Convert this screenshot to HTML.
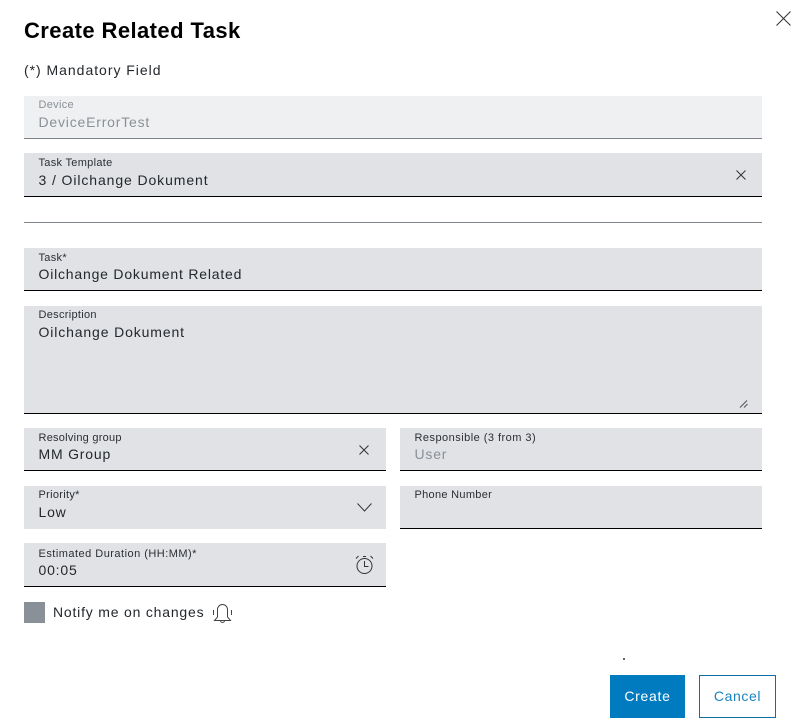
<!DOCTYPE html>
<html><head><meta charset="utf-8"><style>
html,body{margin:0;padding:0;background:#fff;width:794px;height:728px;overflow:hidden}
body{position:relative;font-family:"Liberation Sans",sans-serif;color:#1a1d21}
.f{position:absolute;background:#e0e2e5;box-sizing:border-box;border-bottom:1px solid #000}
.t{position:absolute;white-space:nowrap}
.l{font-size:11px;letter-spacing:.3px;line-height:14px;color:#2b2f34;margin-top:1px}
.v{font-size:14px;letter-spacing:.8px;line-height:18px;color:#24282c}
svg{position:absolute;overflow:visible}
</style></head><body>
<div class="t" style="left:24px;top:18px;font-size:22px;font-weight:bold;line-height:26px;color:#000;letter-spacing:.42px">Create Related Task</div>
<div class="t v" style="left:24px;top:61px;letter-spacing:.97px">(*) Mandatory Field</div>
<svg style="left:776px;top:11px" width="15" height="15" fill="none" stroke="#333" stroke-width="1"><path d="M.5.5 14.500 14.500M14.500.5.5 14.500"/></svg>

<div class="f" style="left:24px;top:96px;width:738px;height:43px;background:#eff0f2;border-color:#7d8389"></div>
<div class="t l" style="left:38.500px;top:97px;color:#8a9097">Device</div>
<div class="t v" style="left:38.500px;top:113px;color:#8a9097">DeviceErrorTest</div>

<div class="f" style="left:24px;top:153px;width:738px;height:44px"></div>
<div class="t l" style="left:38.500px;top:155px">Task Template</div>
<div class="t v" style="left:38.500px;top:171px;letter-spacing:.9px">3 / Oilchange Dokument</div>
<svg style="left:736px;top:170px" width="10" height="10" fill="none" stroke="#333" stroke-width="1"><path d="M.5.5 9.500 9.500M9.500.5.5 9.500"/></svg>

<div style="position:absolute;left:24px;top:222px;width:738px;height:1px;background:#7d8389"></div>

<div class="f" style="left:24px;top:248px;width:738px;height:43px"></div>
<div class="t l" style="left:38.500px;top:250px">Task*</div>
<div class="t v" style="left:38.500px;top:265px;letter-spacing:.8px">Oilchange Dokument Related</div>

<div class="f" style="left:24px;top:306px;width:738px;height:108px"></div>
<div class="t l" style="left:38.500px;top:307px">Description</div>
<div class="t v" style="left:38.500px;top:323px;letter-spacing:.87px">Oilchange Dokument</div>
<svg style="left:740px;top:400px" width="8" height="8" fill="none" stroke="#555" stroke-width="1"><path d="M0 7.500 7 .5M4 7.500 7.500 4"/></svg>

<div class="f" style="left:24px;top:428px;width:362px;height:43px"></div>
<div class="t l" style="left:38.500px;top:430px;letter-spacing:.25px">Resolving group</div>
<div class="t v" style="left:38.500px;top:445px">MM Group</div>
<svg style="left:359px;top:445px" width="10" height="10" fill="none" stroke="#333" stroke-width="1"><path d="M.5.5 9.500 9.500M9.500.5.5 9.500"/></svg>

<div class="f" style="left:400px;top:428px;width:362px;height:43px"></div>
<div class="t l" style="left:414.500px;top:430px;letter-spacing:.47px">Responsible (3 from 3)</div>
<div class="t v" style="left:414.500px;top:445px;color:#8a9097">User</div>

<div class="f" style="left:24px;top:486px;width:362px;height:43px;border-bottom:0"></div>
<div class="t l" style="left:38.500px;top:487px">Priority*</div>
<div class="t v" style="left:38.500px;top:503px">Low</div>
<svg style="left:357px;top:503px" width="15" height="9" fill="none" stroke="#333" stroke-width="1"><path d="M.5.5 7.500 8 14.500.5"/></svg>

<div class="f" style="left:400px;top:486px;width:362px;height:43px"></div>
<div class="t l" style="left:414.500px;top:487px">Phone Number</div>

<div class="f" style="left:24px;top:543px;width:362px;height:44px"></div>
<div class="t l" style="left:38.500px;top:546px;letter-spacing:.48px">Estimated Duration (HH:MM)*</div>
<div class="t v" style="left:38.500px;top:561px">00:05</div>
<svg style="left:355px;top:555px" width="20" height="21" fill="none" stroke="#333" stroke-width="1"><circle cx="9.500" cy="11" r="7.500"/><path d="M9.500 6v5.500h4M1 3.500 3.500 1M18 3.500 15.500 1M8 1.500h3"/></svg>

<div style="position:absolute;left:24px;top:602px;width:21px;height:21px;background:#8a9097"></div>
<div class="t v" style="left:53px;top:603px;letter-spacing:.8px">Notify me on changes</div>
<svg style="left:213px;top:603px" width="19" height="21" fill="none" stroke="#444" stroke-width="1"><path d="M4.500 14V6.500a5 5 0 0 1 10 0V14l3 3.500H1.500zM7.500 17.500a2 2 0 0 0 4 0M.5 7v5M18.500 7v5"/></svg>

<div style="position:absolute;left:623px;top:658px;width:2px;height:2px;background:#666"></div>
<div class="t" style="left:610px;top:675px;width:75px;height:43px;background:#007bc0;color:#fff;font-size:14px;letter-spacing:.7px;line-height:43px;text-align:center">Create</div>
<div class="t" style="left:699px;top:675px;width:77px;height:43px;box-sizing:border-box;border:1px solid #0f6ea5;color:#1a83c0;font-size:14px;letter-spacing:.6px;line-height:41px;text-align:center">Cancel</div>
</body></html>
